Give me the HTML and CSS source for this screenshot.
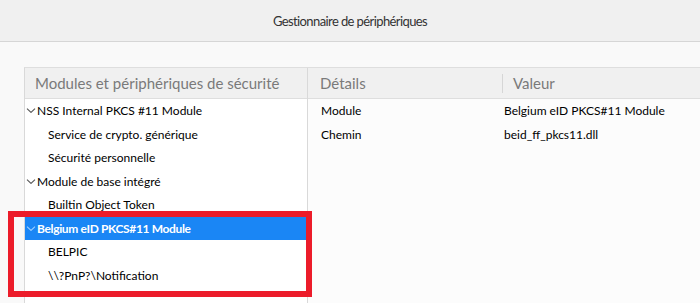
FILE: index.html
```html
<!DOCTYPE html>
<html lang="fr">
<head>
<meta charset="utf-8">
<title>Gestionnaire de périphériques</title>
<link rel="stylesheet" href="styles.css">
</head>
<body>
<header class="topbar"><h1 class="title">Gestionnaire de périphériques</h1></header>
<main class="content">
  <div class="panel">
    <div class="col-left">
      <div class="head head-left">Modules et périphériques de sécurité</div>
      <ul class="tree">
        <li class="row parent"><svg class="chev" viewBox="0 0 10 5"><path d="M1 0.6 L5 4.4 L9 0.6"/></svg>NSS Internal PKCS #11 Module</li>
        <li class="row child">Service de crypto. générique</li>
        <li class="row child">Sécurité personnelle</li>
        <li class="row parent"><svg class="chev" viewBox="0 0 10 5"><path d="M1 0.6 L5 4.4 L9 0.6"/></svg>Module de base intégré</li>
        <li class="row child">Builtin Object Token</li>
        <li class="row parent selected"><svg class="chev" viewBox="0 0 10 5"><path d="M1 0.6 L5 4.4 L9 0.6"/></svg>Belgium eID PKCS#11 Module</li>
        <li class="row child">BELPIC</li>
        <li class="row child">\\?PnP?\Notification</li>
      </ul>
      <div class="highlight"></div>
    </div>
    <div class="col-right">
      <div class="head head-right">
        <span class="h-details">Détails</span>
        <span class="h-sep"></span>
        <span class="h-value">Valeur</span>
      </div>
      <div class="detail-row"><span class="d-key">Module</span><span class="d-val">Belgium eID PKCS#11 Module</span></div>
      <div class="detail-row"><span class="d-key">Chemin</span><span class="d-val">beid_ff_pkcs11.dll</span></div>
    </div>
  </div>
</main>
</body>
</html>
```
FILE: styles.css
```css
* { box-sizing: border-box; }
html, body { margin: 0; padding: 0; height: 100%; }
body {
  background: #f9f9f9;
  font-family: "Lato", "Noto Sans", sans-serif;
  color: #000;
  overflow: hidden;
}
.topbar {
  height: 42px;
  background: #f0f0f0;
  border-bottom: 1px solid #d6d6d6;
  display: flex;
  align-items: center;
  justify-content: center;
}
.title {
  margin: 0;
  font-size: 13px;
  letter-spacing: -0.6px;
  font-weight: 400;
  color: #333;
  padding-top: 1px;
}
.content {
  padding: 25px 0 0 24px;
  height: calc(100% - 42px);
}
.panel {
  display: grid;
  grid-template-columns: 283px 1fr;
  height: 100%;
  border-left: 1px solid #d9d9d9;
  border-top: 1px solid #dedede;
}
.col-left {
  position: relative;
  background: #fff;
  border-right: 1px solid #d9d9d9;
}
.col-right { background: #fcfcfc; }
.head {
  height: 31px;
  background: #f0f0f0;
  border-bottom: 1px solid #dedede;
  color: #7a7a7a;
  font-size: 15px;
  display: flex;
  align-items: center;
}
.head-left { padding-left: 10px; }
.head-right { padding-left: 12px; }
.h-details { width: 182px; }
.h-sep { width: 1px; height: 19px; background: #d6d6d6; margin-right: 10px; }
.tree { list-style: none; margin: 0; padding: 0; }
.row {
  height: 23.5px;
  display: flex;
  align-items: center;
  font-size: 12px;
  white-space: nowrap;
}
.parent { padding-left: 1px; }
.child { padding-left: 23px; }
.chev {
  width: 10px;
  height: 5px;
  margin-right: 1px;
  fill: none;
  stroke: #555;
  stroke-width: 1.1;
}
.selected {
  background: #1a86f5;
  color: #fff;
  font-weight: 700;
  letter-spacing: -0.35px;
}
.selected .chev { stroke: #9fd0ff; }
.detail-row {
  height: 23.5px;
  display: flex;
  align-items: center;
  font-size: 12px;
  padding-left: 13px;
}
.d-key { width: 183px; }
.highlight {
  position: absolute;
  left: -17px;
  top: 143px;
  width: 304px;
  height: 86px;
  border: 6px solid #ec1c2a;
  pointer-events: none;
}
```
